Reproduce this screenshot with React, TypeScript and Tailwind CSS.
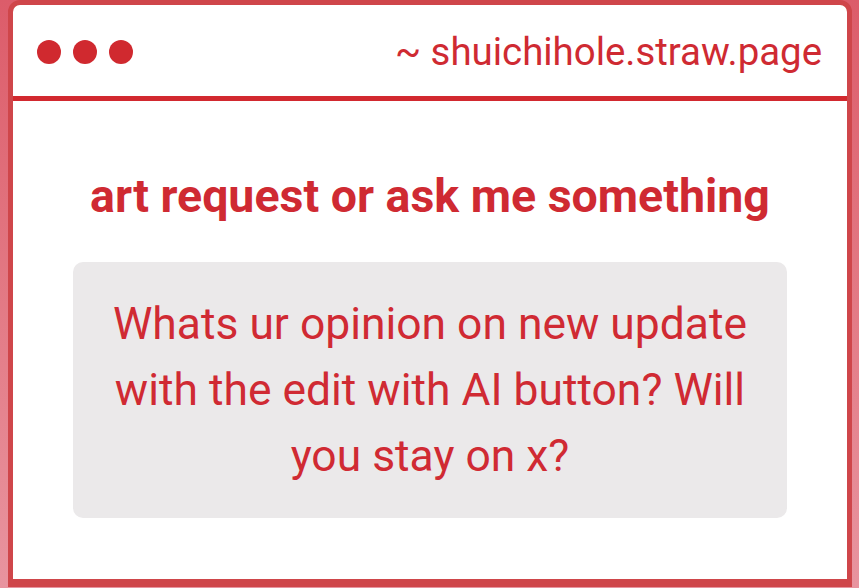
export default function App() {
  return (
    <div
      className="w-[859px] h-[588px] overflow-hidden pl-[8px] pr-[7px] bg-gradient-to-b from-[#dc5c6a] to-[#e8949f]"
      style={{ fontFamily: 'Roboto, "Liberation Sans", sans-serif' }}
    >
      <div className="h-[587px] flex flex-col bg-white border-x-[5px] border-t-[5px] border-b-[8px] border-[#cf464a] rounded-t-[12px]">
        <div className="h-[91px] flex items-center justify-between pl-[24px] pr-[25px] pt-[2px]">
          <div className="flex gap-[12px]">
            <span className="w-[24px] h-[24px] rounded-full bg-[#d0292f]" />
            <span className="w-[24px] h-[24px] rounded-full bg-[#d0292f]" />
            <span className="w-[24px] h-[24px] rounded-full bg-[#d0292f]" />
          </div>
          <div className="text-[38.4px] leading-[44px] text-[#cf2a32]">~ shuichihole.straw.page</div>
        </div>
        <div className="h-[5px] bg-[#d2292f]" />
        <div className="flex-1 flex flex-col items-center pt-[68px] px-[60px]">
          <h1 className="text-[46.5px] leading-[54px] font-bold text-[#cf2a32] whitespace-nowrap">art request or ask me something</h1>
          <div className="mt-[39px] w-full h-[256px] rounded-[10px] bg-[#ebe9ea] flex items-center justify-center px-[20px]">
            <p className="text-center text-[44.4px] leading-[66px] text-[#d02a33] whitespace-nowrap">
              Whats ur opinion on new update
              <br />
              with the edit with AI button? Will
              <br />
              you stay on x?
            </p>
          </div>
        </div>
      </div>
    </div>
  );
}
